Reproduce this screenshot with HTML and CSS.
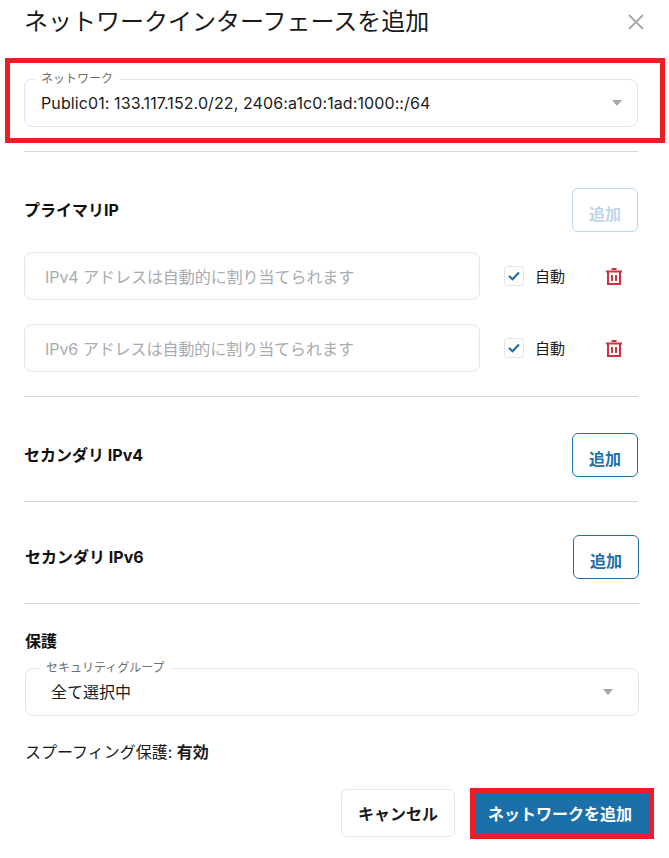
FILE: index.html
```html
<!DOCTYPE html>
<html lang="ja">
<head>
    <meta charset="UTF-8">
    <meta name="viewport" content="width=device-width, initial-scale=1.0">
    <title>ネットワークインターフェースを追加</title>
    <link rel="stylesheet" href="styles.css">
</head>
<body>
    <main class="dialog">
        <div class="dialogHeader">
            <h1>ネットワークインターフェースを追加</h1>
            <svg class="closeIcon" width="16" height="16" viewBox="0 0 16 16">
                <path d="M1 1 L15 15 M15 1 L1 15" stroke="#a4a8ad" stroke-width="1.8" fill="none"/>
            </svg>
        </div>

        <div class="redBox">
            <div class="selectField">
                <span class="fieldLabel">ネットワーク</span>
                <span class="fieldValue networkValue">Public01: 133.117.152.0/22, 2406:a1c0:1ad:1000::/64</span>
                <span class="caret"></span>
            </div>
        </div>

        <div class="section sectionPrimary">
            <div class="sectionRow">
                <h2>プライマリIP</h2>
                <button class="addButton disabled">追加</button>
            </div>
            <div class="ipRow">
                <div class="ipInput">IPv4 アドレスは自動的に割り当てられます</div>
                <span class="checkBox">
                    <svg width="12" height="10" viewBox="0 0 12 10"><path d="M1 5 L4.5 8.2 L11 1.5" stroke="#1b70aa" stroke-width="2.2" fill="none"/></svg>
                </span>
                <span class="autoLabel">自動</span>
                <svg class="trashIcon" width="16" height="17" viewBox="0 0 16 17">
                    <path d="M5.5 1 H10.5 M0 3.5 H16 M2 4 V16 H14 V4 M6 7 V13 M10 7 V13" stroke="#cc3340" stroke-width="2" fill="none"/>
                </svg>
            </div>
            <div class="ipRow">
                <div class="ipInput">IPv6 アドレスは自動的に割り当てられます</div>
                <span class="checkBox">
                    <svg width="12" height="10" viewBox="0 0 12 10"><path d="M1 5 L4.5 8.2 L11 1.5" stroke="#1b70aa" stroke-width="2.2" fill="none"/></svg>
                </span>
                <span class="autoLabel">自動</span>
                <svg class="trashIcon" width="16" height="17" viewBox="0 0 16 17">
                    <path d="M5.5 1 H10.5 M0 3.5 H16 M2 4 V16 H14 V4 M6 7 V13 M10 7 V13" stroke="#cc3340" stroke-width="2" fill="none"/>
                </svg>
            </div>
        </div>

        <div class="section sectionV4">
            <div class="sectionRow">
                <h2>セカンダリ IPv4</h2>
                <button class="addButton">追加</button>
            </div>
        </div>

        <div class="lowerPart">
            <div class="section sectionV6">
                <div class="sectionRow">
                    <h2>セカンダリ IPv6</h2>
                    <button class="addButton">追加</button>
                </div>
            </div>

            <div class="protection">
                <h2>保護</h2>
                <div class="selectField groupField">
                    <span class="fieldLabel">セキュリティグループ</span>
                    <span class="fieldValue">全て選択中</span>
                    <span class="caret"></span>
                </div>
                <p class="spoofText">スプーフィング保護: <b>有効</b></p>
            </div>
        </div>

        <div class="dialogFooter">
            <button class="cancelButton">キャンセル</button>
            <div class="submitBox">
                <button class="submitButton">ネットワークを追加</button>
            </div>
        </div>
    </main>
</body>
</html>
```

FILE: styles.css
```css
* {
    box-sizing: border-box;
}

body {
    margin: 0;
    background: #fff;
    color: #1a1a1a;
    font-family: Inter, "Noto Sans CJK JP", sans-serif;
}

.dialog {
    width: 669px;
    height: 858px;
    padding: 0 31px 0 24px;
    overflow: hidden;
}

.dialogHeader {
    display: flex;
    justify-content: space-between;
    align-items: center;
    height: 44px;
    margin-right: -6px;
}

.dialogHeader h1 {
    margin: 0;
    font-size: 24px;
    font-weight: 400;
    line-height: 44px;
}

.redBox {
    margin: 14px -27px 0 -19px;
    padding: 16px 22px 11px 14px;
    height: 85px;
    border: 5px solid #ee1c25;
}

.selectField {
    position: relative;
    display: flex;
    align-items: center;
    height: 48px;
    padding: 0 16px;
    border: 1px solid #e1e4f1;
    border-radius: 8px;
}

.fieldLabel {
    position: absolute;
    top: -9px;
    left: 10px;
    padding: 0 6px;
    background: #fff;
    color: #6b6f76;
    font-size: 12px;
    line-height: 16px;
}

.fieldValue {
    flex: 1;
    font-size: 16px;
    line-height: 22px;
}

.networkValue {
    letter-spacing: 0.1px;
}

.caret {
    margin-right: -1px;
    border-left: 5px solid transparent;
    border-right: 5px solid transparent;
    border-top: 6px solid #a4a8ad;
}

.section {
    border-bottom: 1px solid #d4d6da;
    padding-bottom: 24px;
}

.sectionPrimary {
    margin-top: 8px;
    border-top: 1px solid #d4d6da;
    padding-top: 36px;
}

.sectionV4 {
    padding-top: 36px;
}

.sectionV6 {
    padding-top: 33px;
}

.sectionRow {
    display: flex;
    justify-content: space-between;
    align-items: center;
}

h2 {
    margin: 0;
    color: #111;
    font-size: 16px;
    font-weight: 700;
    line-height: 20px;
}

.addButton {
    width: 66px;
    height: 44px;
    padding: 8px 0 0;
    background: #fff;
    border: 1px solid #1b70aa;
    border-radius: 6px;
    color: #1b70aa;
    font-family: inherit;
    font-size: 16px;
    font-weight: 700;
    line-height: 20px;
}

.addButton.disabled {
    border-color: #bcd6e8;
    color: #bcd6e8;
}

.ipRow {
    display: flex;
    align-items: center;
    margin-top: 24px;
}

.sectionRow + .ipRow {
    margin-top: 20px;
}

.ipInput {
    width: 456px;
    height: 48px;
    padding: 0 20px;
    border: 1px solid #e1e4f1;
    border-radius: 8px;
    color: #a9abaf;
    font-size: 16px;
    letter-spacing: -0.05px;
    line-height: 48px;
}

.checkBox {
    display: flex;
    align-items: center;
    justify-content: center;
    width: 20px;
    height: 20px;
    margin-left: 24px;
    border: 1px solid #e1e4f1;
    border-radius: 3px;
}

.autoLabel {
    margin-left: 11px;
    font-size: 15px;
    line-height: 20px;
    margin-top: 2px;
}

.trashIcon {
    margin-left: 41px;
}

.lowerPart {
    margin: 0 -1px 0 1px;
}

.protection {
    padding-top: 27px;
}

.groupField {
    margin-top: 17px;
}

.groupField .fieldLabel {
    left: 14px;
}

.groupField .fieldValue {
    padding-left: 9px;
}

.groupField .caret {
    margin-right: 9px;
}

.spoofText {
    margin: 26px 0 0;
    font-size: 16px;
    line-height: 20px;
}

.dialogFooter {
    display: flex;
    align-items: flex-start;
    justify-content: flex-end;
    margin: 26px -16px 0 0;
}

.cancelButton {
    width: 114px;
    height: 48px;
    margin-top: 1px;
    background: #fff;
    border: 1px solid #e6e7ea;
    border-radius: 6px;
    color: #1a1a1a;
    font-family: inherit;
    font-size: 16px;
    font-weight: 700;
}

.submitBox {
    margin-left: 15px;
    border: 5px solid #ee1c25;
}

.submitButton {
    display: block;
    width: 174px;
    height: 41px;
    padding: 0 4px 2px 0;
    background: #1b70aa;
    border: none;
    color: #fff;
    font-family: inherit;
    font-size: 16px;
    font-weight: 700;
}
```
